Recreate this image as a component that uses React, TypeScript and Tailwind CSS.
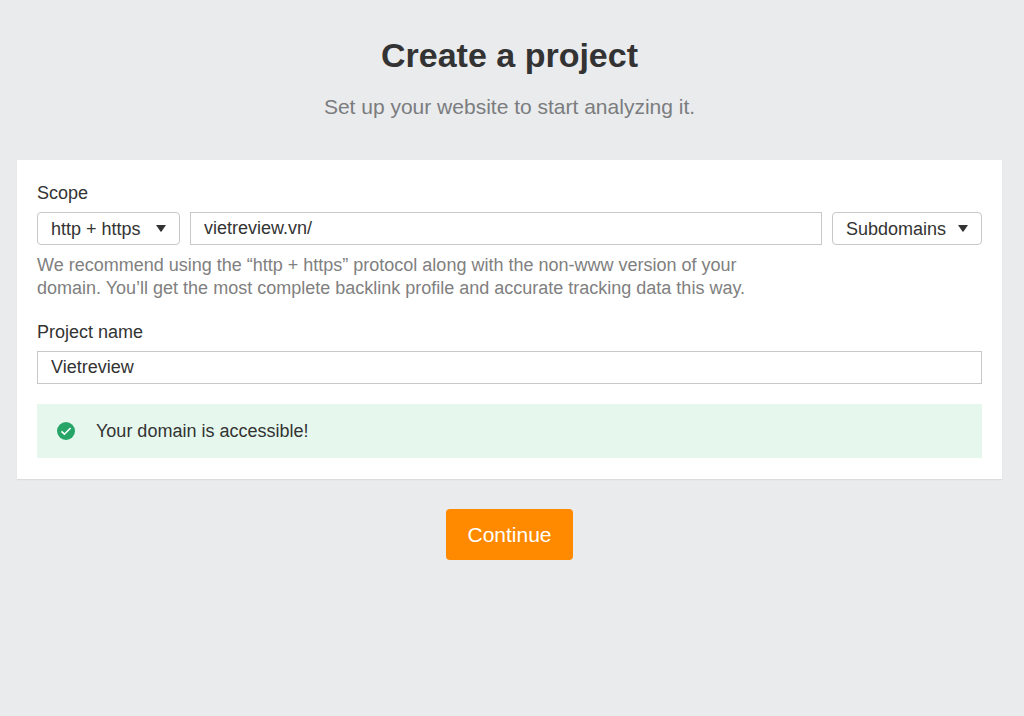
import React, { useState } from 'react';
import clsx from 'clsx';

interface DropdownProps {
  label: string;
  value: string;
  options: string[];
  onChange: (value: string) => void;
  className?: string;
}

// Native select with its own arrow
function Dropdown({ label, value, options, onChange, className }: DropdownProps) {
  return (
    <div className={clsx('relative shrink-0', className)}>
      <select
        aria-label={label}
        value={value}
        onChange={(e) => onChange(e.target.value)}
        className="block h-[33px] w-full appearance-none rounded border border-[#c8c8c8] bg-white pl-[13px] pr-8 text-lg leading-6 text-[#333]"
      >
        {options.map((option) => (
          <option key={option}>{option}</option>
        ))}
      </select>
      <svg
        viewBox="0 0 10 7"
        className="pointer-events-none absolute right-[14px] top-[13px] h-[7px] w-[10px] fill-[#333]"
        aria-hidden="true"
      >
        <path d="M0.6 0h8.8q.6 0 .3.5L5.5 6.5q-.5.6-1 0L.3.5Q0 0 .6 0z" />
      </svg>
    </div>
  );
}

function CheckIcon() {
  return (
    <svg viewBox="0 0 18 18" className="size-[18px] shrink-0" aria-hidden="true">
      <circle cx="9" cy="9" r="9" fill="#27a567" />
      <path
        d="M4.5 9.4l2.9 2.8 6.2-6.2"
        fill="none"
        stroke="#fff"
        strokeWidth="1.6"
      />
    </svg>
  );
}

export default function App() {
  const [protocol, setProtocol] = useState('http + https');
  const [domain, setDomain] = useState('vietreview.vn/');
  const [mode, setMode] = useState('Subdomains');
  const [name, setName] = useState('Vietreview');

  return (
    <main className="min-h-screen bg-[#e9ebed] pl-[17px] pr-[22px] pt-[35px] font-['Liberation_Sans',Arial,sans-serif] text-lg leading-6 text-[#333]">
      {/* Heading */}
      <header className="text-center">
        <h1 className="text-[34px] font-bold leading-10">Create a project</h1>
        <p className="mt-[18px] text-[21px] leading-7 text-[#7b7c7e]">
          Set up your website to start analyzing it.
        </p>
      </header>

      <form onSubmit={(e) => e.preventDefault()}>
        <div className="mt-[39px] bg-white px-5 py-[21px] shadow-[0_1px_1px_#d9dbdd]">
          {/* Scope */}
          <label htmlFor="domain" className="block">Scope</label>
          <div className="mt-[7px] flex gap-[10px]">
            <Dropdown
              label="Protocol"
              value={protocol}
              options={['http + https', 'http', 'https']}
              onChange={setProtocol}
              className="w-[143px]"
            />
            <input
              id="domain"
              type="text"
              value={domain}
              onChange={(e) => setDomain(e.target.value)}
              className="h-[33px] min-w-0 flex-1 border border-[#c8c8c8] bg-white px-[13px]"
            />
            <Dropdown
              label="Mode"
              value={mode}
              options={['Subdomains', 'Domain', 'Path', 'Exact URL']}
              onChange={setMode}
              className="w-[150px]"
            />
          </div>
          <p className="mt-[9px] max-w-[740px] leading-[23px] text-[#808080]">
            We recommend using the “http + https” protocol along with the non-www version of your
            domain. You’ll get the most complete backlink profile and accurate tracking data this way.
          </p>

          {/* Project name */}
          <label htmlFor="project-name" className="mt-5 block">Project name</label>
          <input
            id="project-name"
            type="text"
            value={name}
            onChange={(e) => setName(e.target.value)}
            className="mt-[7px] block h-[33px] w-full border border-[#c8c8c8] bg-white px-[13px]"
          />

          {/* Domain check result */}
          <div role="status" className="mt-5 flex h-[54px] items-center gap-[21px] bg-[#e6f8ee] px-5">
            <CheckIcon />
            <span>Your domain is accessible!</span>
          </div>
        </div>

        <div className="mt-[30px] flex justify-center">
          <button type="submit" className="h-[51px] rounded bg-[#ff8a00] px-[21px] text-[21px] leading-7 text-white">
            Continue
          </button>
        </div>
      </form>
    </main>
  );
}
